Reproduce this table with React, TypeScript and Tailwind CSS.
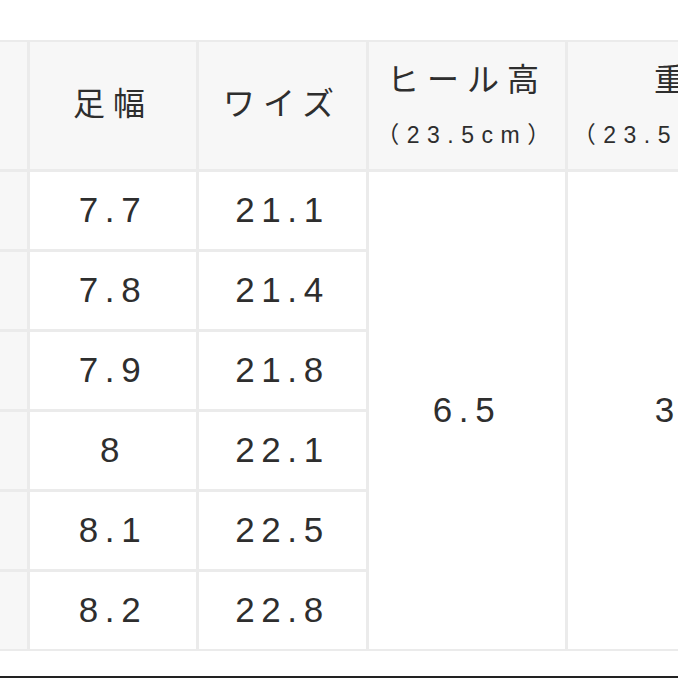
const font = { fontFamily: '"Liberation Sans", "Noto Sans CJK JP", sans-serif' };

const rows = [
  { foot: "7.7", wise: "21.1" },
  { foot: "7.8", wise: "21.4" },
  { foot: "7.9", wise: "21.8" },
  { foot: "8", wise: "22.1" },
  { foot: "8.1", wise: "22.5" },
  { foot: "8.2", wise: "22.8" },
];

function HeadCell({ title, sub }: { title: string; sub?: string }) {
  return (
    <div className="bg-[#f7f7f7] flex flex-col items-center justify-center gap-[23px] pb-[4px] whitespace-nowrap">
      <span className="text-[32px] leading-[40px] tracking-[8px]">{title}</span>
      {sub && <span className="text-[23px] leading-[24px] tracking-[7.5px]">{sub}</span>}
    </div>
  );
}

function NumCell({ value }: { value: string }) {
  return (
    <div className="bg-white flex items-center justify-center text-[35px] tracking-[0.19em]">
      {value}
    </div>
  );
}

export default function App() {
  return (
    <div className="w-[678px] h-[678px] overflow-hidden bg-white flex flex-col text-[#2e2e2e]" style={font}>
      <div className="mt-[40px] w-[852px] py-[2px] bg-[#ebebeb]">
        <div className="grid grid-cols-[27px_166px_167px_196px_252px] grid-rows-[127px_repeat(6,77px)] gap-[3px]">
          <div className="bg-[#f7f7f7]" />
          <HeadCell title="足幅" />
          <HeadCell title="ワイズ" />
          <HeadCell title="ヒール高" sub="（23.5cm）" />
          <HeadCell title="重量" sub="（23.5cm片足）" />

          {rows.map((r, i) => (
            <>
              <div key={`a${i}`} className="bg-[#f7f7f7]" />
              <NumCell key={`b${i}`} value={r.foot} />
              <NumCell key={`c${i}`} value={r.wise} />
              {i === 0 && (
                <>
                  <div className="row-span-6 bg-white flex items-center justify-center text-[35px] tracking-[0.19em]">
                    6.5
                  </div>
                  <div className="row-span-6 bg-white flex items-center justify-center text-[35px] tracking-[0.19em]">
                    300
                  </div>
                </>
              )}
            </>
          ))}
        </div>
      </div>
      <div className="mt-auto h-[2px] bg-[#222]" />
    </div>
  );
}
